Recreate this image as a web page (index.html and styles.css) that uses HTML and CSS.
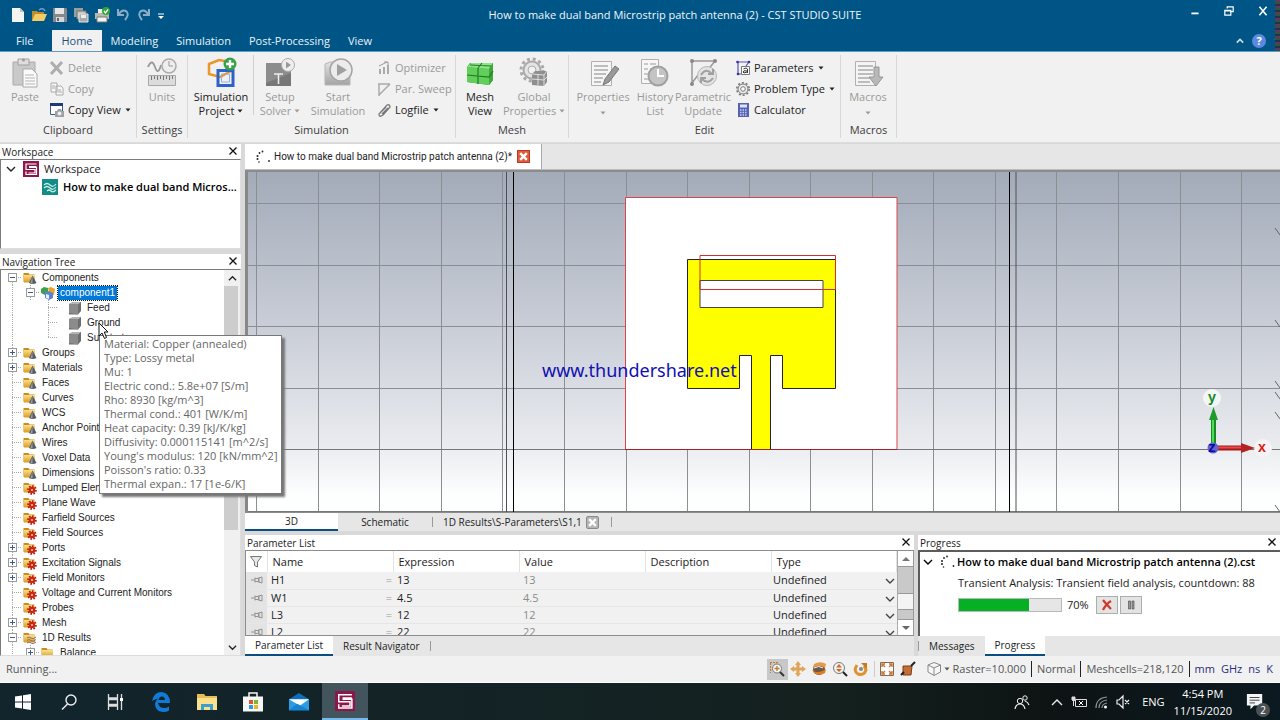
FILE: index.html
```html
<!DOCTYPE html>
<html lang="en">
<head>
<meta charset="utf-8">
<title>How to make dual band Microstrip patch antenna (2) - CST STUDIO SUITE</title>
<link rel="stylesheet" href="styles.css">
</head>
<body>
<svg class="sprite" aria-hidden="true">
  <defs>
    <linearGradient id="gold" x1="0" y1="0" x2="0" y2="1"><stop offset="0" stop-color="#fbe08a"/><stop offset="1" stop-color="#d79a20"/></linearGradient>
    <linearGradient id="sky" x1="0" y1="0" x2="0" y2="1"><stop offset="0" stop-color="#a3abb9"/><stop offset="0.5" stop-color="#cdd1da"/><stop offset="0.8" stop-color="#e9ebef"/><stop offset="0.95" stop-color="#fdfefe"/><stop offset="1" stop-color="#ffffff"/></linearGradient>
    <linearGradient id="grey" x1="0" y1="0" x2="0" y2="1"><stop offset="0" stop-color="#e2e2e2"/><stop offset="1" stop-color="#a4a4a4"/></linearGradient>
  </defs>
  <symbol id="folder" viewBox="0 0 14 14"><path d="M0.5 2h5l1 1.500h5V11H.5z" fill="#c98d1e"/><path d="M1 4h11v7.500H1z" fill="url(#gold)"/></symbol>
  <symbol id="fcone" viewBox="0 0 14 14"><use href="#folder"/><path d="M9.500 4.500L13.500 12q-4 2-7.500 0z" fill="#555b66"/><path d="M9.500 5l-2 7 2 .5z" fill="#9aa1ad"/></symbol>
  <symbol id="fgear" viewBox="0 0 14 14"><use href="#folder"/><circle cx="9" cy="9" r="3.800" fill="none" stroke="#b51c0e" stroke-width="2" stroke-dasharray="1.600 1.300"/><circle cx="9" cy="9" r="3.200" fill="#cf2414"/><circle cx="9" cy="9" r="1" fill="#f6d9a0"/></symbol>
  <symbol id="fwave" viewBox="0 0 14 14"><use href="#folder"/><path d="M4 7q2-2 4 0t5-1M4 9.500q2-2 4 0t5-1M4 12q2-2 4 0t5-1" fill="none" stroke="#8a6d6d"/></symbol>
  <symbol id="cube" viewBox="0 0 14 14"><path d="M1 3l4-2h8v9l-3 3.500H1z" fill="#6d6d6d"/><path d="M1 3l4-2h8l-3 2.500z" fill="#b5b5b5"/><path d="M1 3l9 .5v10L1 12z" fill="#8b8b8b"/></symbol>
  <symbol id="comp" viewBox="0 0 14 14"><path d="M0 3l3-2 4 1v5L4 9 0 7z" fill="#3da04a"/><path d="M7 2l3-1 4 2-1 6-4 1z" fill="#e5a52a"/><path d="M4 6l4-1 4 2v5l-4 2-4-2z" fill="#5b83d0"/><path d="M5 8l3 1v4l-3-1z" fill="#e8eefb"/></symbol>
  <symbol id="cst" viewBox="0 0 16 16"><path d="M0 0h16v16H0z" fill="#8c1748"/><path d="M13.500 3H3v5.500h9V12H5.500M6 5.500h7.500M3 10.500v3h10.500V6.500H6" fill="none" stroke="#fff" stroke-width="1.200"/></symbol>
  <symbol id="wave" viewBox="0 0 16 16"><path d="M0 0h16v16H0z" fill="#138b86"/><path d="M2 6q3-3 6 0t6-1M2 9q3-3 6 0t6-1M5 12q2-2 4 0t5-1" fill="none" stroke="#c9efe9" stroke-width="1.200"/></symbol>
  <symbol id="x" viewBox="0 0 10 10"><path d="M1.500 1.500l7 7M8.500 1.500l-7 7" stroke="currentColor" stroke-width="1.300"/></symbol>
  <symbol id="bx" viewBox="0 0 10 10"><path d="M2 2l6 6M8 2L2 8" stroke="currentColor" stroke-width="2.200"/></symbol>
  <symbol id="chev" viewBox="0 0 10 10"><path d="M1 3l4 4 4-4" fill="none" stroke="currentColor" stroke-width="1.400"/></symbol>
  <symbol id="tri" viewBox="0 0 6 6"><path d="M0.500 1.500h5L3 4.500z" fill="currentColor"/></symbol>
  <symbol id="spin" viewBox="0 0 16 16"><g fill="#222"><circle cx="7.500" cy="2.500" r=".9"/><circle cx="4.500" cy="4" r=".9"/><circle cx="2.500" cy="7" r="1"/><circle cx="2.500" cy="10" r="1"/><circle cx="4" cy="13" r=".8"/><circle cx="14" cy="12" r=".9"/></g></symbol>
  <symbol id="pin" viewBox="0 0 12 8"><path d="M0 4h4M4 1.500v5M4 2.500h3.500v3H4M8 1v6M8 2l3-1v6L8 6" fill="none" stroke="#929292"/></symbol>
</svg>

<header class="top">
  <div class="titlebar">
    <div class="quick">
      <button aria-label="New"><svg viewBox="0 0 16 16"><path d="M2 1h8l4 4v10H2z" fill="#f4f4f2"/><path d="M10 1v4h4z" fill="#c3c3bd"/></svg></button>
      <button aria-label="Open"><svg viewBox="0 0 16 16"><path d="M1 4h5l1 1h6v9H1z" fill="#c08b2a"/><path d="M4 7h12l-3 7H1z" fill="#f3cc68"/><path d="M8 3q4-3 6 1" fill="none" stroke="#6f9cc5" stroke-width="1.500"/></svg></button>
      <button aria-label="Save"><svg viewBox="0 0 16 16"><path d="M1 1h13l1 1v13H1z" fill="#85898d"/><path d="M3 1h9v6H3z" fill="#e6e6e6"/><path d="M4 10h8v5H4z" fill="#d7d7d7"/><path d="M5 11h2v3H5z" fill="#666"/></svg></button>
      <button aria-label="Save all"><svg viewBox="0 0 16 16"><path d="M1 1h9v9H1z" fill="#9a9da0"/><path d="M4 4h9v8H4z" fill="#c5c5c5" stroke="#6e7275"/><path d="M6 7h9v8H6z" fill="#a9a9a9" stroke="#e3e3e3"/><path d="M8 8h5v3H8z" fill="#eee"/></svg></button>
      <button aria-label="Print"><svg viewBox="0 0 16 16"><path d="M4 2h8v5H4z" fill="#eee"/><path d="M1 6h14v6H1z" fill="#b8b8b0"/><path d="M3 10h10v5H3z" fill="#f3f3f3" stroke="#777"/><circle cx="12" cy="4" r="4" fill="#2fa53a"/><path d="M10 4l1.500 2L14 2.500" fill="none" stroke="#fff" stroke-width="1.300"/></svg></button>
      <button aria-label="Undo"><svg viewBox="0 0 16 16"><path d="M3 2v6h6M4 7q3-5 7-3 4 3-1 9" fill="none" stroke="#8eacc6" stroke-width="2"/></svg></button>
      <button aria-label="Redo"><svg viewBox="0 0 16 16"><path d="M13 2v6H7M12 7Q9 2 5 4q-4 3 1 9" fill="none" stroke="#8eacc6" stroke-width="2"/></svg></button>
      <button class="narrow" aria-label="Customize toolbar"><svg viewBox="0 0 8 12"><path d="M1 5h6" stroke="#fff"/><path d="M1 7h6l-3 3z" fill="#fff"/></svg></button>
    </div>
    <h1>How to make dual band Microstrip patch antenna (2) - CST STUDIO SUITE</h1>
    <div class="winbtns">
      <button aria-label="Minimize"><svg viewBox="0 0 10 10"><path d="M2 7h6" stroke="#fff" stroke-width="1.500"/></svg></button>
      <button aria-label="Restore"><svg viewBox="0 0 10 10"><path d="M3.500 3V1.500h5v4H7M1.500 4.500h5v4h-5zM1.500 5h5" fill="none" stroke="#fff"/></svg></button>
      <button aria-label="Close"><svg viewBox="0 0 10 10"><path d="M2 1.500l6 7M8 1.500l-6 7" stroke="#fff" stroke-width="1.300"/></svg></button>
    </div>
  </div>
  <nav class="tabs">
    <button class="file">File</button><button class="on">Home</button><button>Modeling</button><button>Simulation</button><button>Post-Processing</button><button>View</button>
    <div class="help">
      <button aria-label="Collapse ribbon"><svg width="8" height="8" viewBox="0 0 10 10"><path d="M1 7l4-4 4 4" fill="none" stroke="#d2dee8" stroke-width="2"/></svg></button>
      <button class="q" aria-label="Help">?</button>
      <svg class="t"><use href="#tri"/></svg>
    </div>
  </nav>
  <div class="edge"></div>
</header>

<section class="ribbon" aria-label="Home ribbon">
  <div class="group g1">
    <div class="tools">
      <button class="big dim w48"><svg viewBox="0 0 32 32"><path d="M4 5h22v23H4z" fill="#c9c9c9" stroke="#aaa"/><path d="M9 2h11v6H9z" fill="#dedede" stroke="#a0a0a0"/><circle cx="14.500" cy="3" r="1.500" fill="#999"/><path d="M14 12h9l5 5v13H14z" fill="#fafafa" stroke="#a9a9a9"/><path d="M16 18h9M16 21h10M16 24h10M16 27h10" stroke="#b5b5b5"/></svg>Paste</button>
      <div class="stack">
        <button class="dim"><svg viewBox="0 0 16 16"><path d="M2 2l11 12M13 2L2 14" stroke="#adadad" stroke-width="3"/></svg>Delete</button>
        <button class="dim"><svg viewBox="0 0 16 16"><path d="M2 2h6v9H2zM7 5h5l2 2v7H7z" fill="#f7f7f7" stroke="#aaa"/><path d="M3 5h3M3 7h3M9 9h3M9 11h4" stroke="#aaa"/></svg>Copy</button>
        <button><svg viewBox="0 0 16 16"><path d="M1.500 2.500h12v10h-12z" fill="#fff" stroke="#3d5d92"/><path d="M1 1h13v3H1z" fill="#1c3b78"/><path d="M6 9h2l1-2h3l1 2h2v6H6z" fill="#9ba1a7"/><circle cx="10.500" cy="11.500" r="2" fill="#eee"/></svg>Copy View<svg class="t"><use href="#tri"/></svg></button>
      </div>
    </div>
    <h2>Clipboard</h2>
  </div>
  <div class="group g2">
    <div class="tools"><button class="big dim w48"><svg viewBox="0 0 32 32"><path d="M2 10q4-9 7 0t6-2" fill="none" stroke="#999" stroke-width="1.800"/><circle cx="23" cy="9" r="7" fill="#eee" stroke="#aaa" stroke-width="1.500"/><path d="M23 4v5h4" fill="none" stroke="#999"/><path d="M2.500 18.500h27v10h-27z" fill="#dcdcdc" stroke="#a8a8a8"/><path d="M5.500 19v4M8.500 19v3M11.500 19v4M14.500 19v3M17.500 19v4M20.500 19v3M23.500 19v4M26.500 19v3" stroke="#777"/></svg>Units</button></div>
    <h2>Settings</h2>
  </div>
  <div class="group g3">
    <div class="tools">
      <button class="big w64"><svg viewBox="0 0 32 32"><path d="M4 7l10-4 12 2v9l-11 6L4 17z" fill="none" stroke="#e9962a" stroke-width="2.500"/><path d="M13 13.500h15v15H13z" fill="none" stroke="#2e62c9" stroke-width="3"/><path d="M16.500 17h8v8h-8z" fill="none" stroke="#8fb0ee"/><circle cx="25" cy="7" r="6.500" fill="#38a345"/><path d="M25 3v8M21 7h8" stroke="#fff" stroke-width="2.400"/></svg>Simulation<span>Project <svg class="t"><use href="#tri"/></svg></span></button>
      <i class="sep"></i>
      <button class="big dim w52"><svg viewBox="0 0 32 32"><path d="M2 6h25v23H2z" fill="#777"/><path d="M2 6h25v10L2 26z" fill="#8c8c8c"/><path d="M10 17h9M14.500 17v10" stroke="#eee" stroke-width="1.500"/><circle cx="24" cy="8" r="6.500" fill="#eee" stroke="#aaa"/><path d="M22 4.500v7l5-3.500z" fill="#999"/></svg>Setup<span>Solver <svg class="t"><use href="#tri"/></svg></span></button>
      <button class="big dim w64"><svg viewBox="0 0 32 32"><path d="M3 7l5-2h16l4 3v20H3z" fill="url(#grey)" stroke="#b5b5b5"/><circle cx="19" cy="13" r="11" fill="#ececec" stroke="#a5a5a5" stroke-width="1.500"/><path d="M15 7v12l10-6z" fill="#a0a0a0"/></svg>Start<span>Simulation</span></button>
      <div class="stack in">
        <button class="dim"><svg viewBox="0 0 16 16"><path d="M3 9h2v5H3zM7 7h2v7H7zM11 5h2v9h-2z" fill="#aaa"/><path d="M3 6l8-4M8 2h4v3" fill="none" stroke="#999"/></svg>Optimizer</button>
        <button class="dim"><svg viewBox="0 0 16 16"><path d="M2 3h12M14 3L3 14M3 3v12" fill="none" stroke="#aaa" stroke-width="1.500"/></svg>Par. Sweep</button>
        <button><svg viewBox="0 0 16 16"><path d="M4 11l7-8q3-1 3 2l-7 8q-4 3-4-1l7-7M6 12l6-6" fill="none" stroke="#777" stroke-width="1.300"/></svg>Logfile<svg class="t"><use href="#tri"/></svg></button>
      </div>
    </div>
    <h2>Simulation</h2>
  </div>
  <div class="group g4">
    <div class="tools">
      <button class="big w48"><svg viewBox="0 0 32 32"><path d="M3 10l3-4h23v17l-4 5-22-3z" fill="#2e8c2e"/><path d="M3 10l22 2v16L3 25z" fill="#62cf5a"/><path d="M3 10l4-4h22l-4 6z" fill="#8ee487"/><path d="M25 12l4-6v17l-4 5z" fill="#3fa83a"/><path d="M14 11v16M3 18l22 2 4-6M6 8l21 1M14 11l4-5" fill="none" stroke="#217a24" stroke-width="1.200"/></svg>Mesh<span>View</span></button>
      <button class="big dim w60"><svg viewBox="0 0 32 32"><circle cx="14" cy="13" r="11" fill="none" stroke="#aaa" stroke-width="3" stroke-dasharray="3 2.800"/><circle cx="14" cy="13" r="8.500" fill="#e4e4e4" stroke="#aaa" stroke-width="2"/><circle cx="14" cy="13" r="4" fill="#f1f1f1" stroke="#aaa"/><path d="M14 17l3-3h12v11l-3 4-12-1z" fill="#8f8f8f"/><path d="M14 17l12 1 3-4M20 17v11M14 22l12 1 3-3M26 18v11" fill="none" stroke="#ddd"/></svg>Global<span>Properties <svg class="t"><use href="#tri"/></svg></span></button>
    </div>
    <h2>Mesh</h2>
  </div>
  <div class="group g5">
    <div class="tools">
      <button class="big dim w60"><svg viewBox="0 0 32 32"><path d="M4.500 4.500h20v24h-20z" fill="#f6f6f6" stroke="#b0b0b0"/><path d="M7 9h14M7 13h14M7 17h12M7 21h9M7 25h7" stroke="#aaa" stroke-width="1.500"/><path d="M16 28l2-6L28 9l4 3-10 13z" fill="#999" stroke="#777"/></svg>Properties<svg class="t"><use href="#tri"/></svg></button>
      <button class="big dim w44"><svg viewBox="0 0 32 32"><path d="M2.500 2.500h17v24h-17z" fill="#f6f6f6" stroke="#b0b0b0"/><path d="M5 7h4M5 12h4M5 17h4M5 22h4M11 7h6M11 12h6" stroke="#999"/><circle cx="19" cy="19" r="9.500" fill="#c4c4c4" stroke="#a0a0a0" stroke-width="2"/><path d="M19 12v7h6" fill="none" stroke="#fff" stroke-width="2"/></svg>History<span>List</span></button>
      <button class="big dim w52"><svg viewBox="0 0 32 32"><path d="M5 4h23M28 4l-8 10M5 4v22M5 26l6-8" fill="none" stroke="#999" stroke-width="1.500"/><g fill="#888"><circle cx="5" cy="4" r="2"/><circle cx="28" cy="4" r="2"/><circle cx="5" cy="27" r="2"/></g><circle cx="20" cy="19" r="9.500" fill="#e3e3e3" stroke="#b5b5b5"/><path d="M14 18q5-8 11-1M26 12v5h-5M26 21q-5 7-11 1M14 26v-5h5" fill="none" stroke="#a0a0a0" stroke-width="2"/></svg>Parametric<span>Update</span></button>
      <div class="stack in">
        <button><svg viewBox="0 0 16 16"><path d="M2 2h12M3 2v12M3 14h3M14 2l-3 4" fill="none" stroke="#5953b8" stroke-width="1.200"/><g fill="#333399"><circle cx="2.500" cy="2" r="1.300"/><circle cx="14" cy="2" r="1.300"/><circle cx="3" cy="14" r="1.300"/></g><path d="M6.500 6.500h8v8h-8z" fill="#fff" stroke="#777"/><path d="M8.500 9q3-2 4 0v4M12 11q-4-1-4 1t4 0" fill="none" stroke="#333"/></svg>Parameters<svg class="t"><use href="#tri"/></svg></button>
        <button><svg viewBox="0 0 16 16"><circle cx="8" cy="8" r="6.200" fill="none" stroke="#777" stroke-width="1.600" stroke-dasharray="2 1.900"/><circle cx="8" cy="8" r="5" fill="#ededed" stroke="#777"/><circle cx="8" cy="8" r="2.300" fill="#fff" stroke="#777"/></svg>Problem Type<svg class="t"><use href="#tri"/></svg></button>
        <button><svg viewBox="0 0 16 16"><path d="M3 1h11v14H3z" fill="#5362b5"/><path d="M5 2.500h7v3H5z" fill="#dfe5ff"/><path d="M5 8h7M5 10.500h7M5 13h7" stroke="#c5cdf3" stroke-width="1.500" stroke-dasharray="1.500 1"/></svg>Calculator</button>
      </div>
    </div>
    <h2>Edit</h2>
  </div>
  <div class="group g6">
    <div class="tools"><button class="big dim w52"><svg viewBox="0 0 32 32"><path d="M3.500 4.500h20v24h-20z" fill="#f4f4f4" stroke="#b0b0b0"/><path d="M6 9h15M6 13h15M6 17h15M6 21h12M6 25h12" stroke="#aaa" stroke-width="1.500"/><path d="M22 10h5v10h4l-7 9-7-9h5z" fill="#b8b8b8" stroke="#969696"/></svg>Macros<svg class="t"><use href="#tri"/></svg></button></div>
    <h2>Macros</h2>
  </div>
</section>

<main>
  <aside>
    <section class="pane workspace">
      <header><h2>Workspace</h2><button aria-label="Close Workspace"><svg><use href="#x"/></svg></button></header>
      <ul class="box">
        <li><svg class="c"><use href="#chev"/></svg><svg class="i"><use href="#cst"/></svg>Workspace</li>
        <li class="sub"><svg class="i"><use href="#wave"/></svg><b>How to make dual band Micros...</b></li>
      </ul>
    </section>
    <section class="pane navigation">
      <header><h2>Navigation Tree</h2><button aria-label="Close Navigation Tree"><svg><use href="#x"/></svg></button></header>
      <div class="box treebox">
        <ul class="tree" role="tree">
          <li><i class="st first"><button class="m" aria-label="Collapse"></button></i><svg><use href="#fcone"/></svg><span>Components</span></li>
          <li><i class="v"></i><i class="st"><button class="m" aria-label="Collapse"></button></i><svg><use href="#comp"/></svg><span class="sel">component1</span></li>
          <li><i class="v"></i><i class="gap"></i><i class="st deep"></i><svg><use href="#cube"/></svg><span>Feed</span></li>
          <li><i class="v"></i><i class="gap"></i><i class="st deep"></i><svg><use href="#cube"/></svg><span>Ground</span></li>
          <li><i class="v"></i><i class="gap"></i><i class="st deep last"></i><svg><use href="#cube"/></svg><span>Substrate</span></li>
          <li><i class="st"><button class="m p" aria-label="Expand"></button></i><svg><use href="#fcone"/></svg><span>Groups</span></li>
          <li><i class="st"><button class="m p" aria-label="Expand"></button></i><svg><use href="#fcone"/></svg><span>Materials</span></li>
          <li><i class="st"></i><svg><use href="#fcone"/></svg><span>Faces</span></li>
          <li><i class="st"></i><svg><use href="#fcone"/></svg><span>Curves</span></li>
          <li><i class="st"></i><svg><use href="#fcone"/></svg><span>WCS</span></li>
          <li><i class="st"></i><svg><use href="#fcone"/></svg><span>Anchor Points</span></li>
          <li><i class="st"></i><svg><use href="#fcone"/></svg><span>Wires</span></li>
          <li><i class="st"></i><svg><use href="#fcone"/></svg><span>Voxel Data</span></li>
          <li><i class="st"></i><svg><use href="#fcone"/></svg><span>Dimensions</span></li>
          <li><i class="st"></i><svg><use href="#fgear"/></svg><span>Lumped Elements</span></li>
          <li><i class="st"></i><svg><use href="#fgear"/></svg><span>Plane Wave</span></li>
          <li><i class="st"></i><svg><use href="#fgear"/></svg><span>Farfield Sources</span></li>
          <li><i class="st"></i><svg><use href="#fgear"/></svg><span>Field Sources</span></li>
          <li><i class="st"><button class="m p" aria-label="Expand"></button></i><svg><use href="#fgear"/></svg><span>Ports</span></li>
          <li><i class="st"><button class="m p" aria-label="Expand"></button></i><svg><use href="#fgear"/></svg><span>Excitation Signals</span></li>
          <li><i class="st"><button class="m p" aria-label="Expand"></button></i><svg><use href="#fgear"/></svg><span>Field Monitors</span></li>
          <li><i class="st"></i><svg><use href="#fgear"/></svg><span>Voltage and Current Monitors</span></li>
          <li><i class="st"></i><svg><use href="#fgear"/></svg><span>Probes</span></li>
          <li><i class="st"><button class="m p" aria-label="Expand"></button></i><svg><use href="#fgear"/></svg><span>Mesh</span></li>
          <li><i class="st"><button class="m" aria-label="Collapse"></button></i><svg><use href="#fwave"/></svg><span>1D Results</span></li>
          <li><i class="v"></i><i class="st"><button class="m p" aria-label="Expand"></button></i><svg><use href="#folder"/></svg><span>Balance</span></li>
        </ul>
        <div class="scroll">
          <button aria-label="Scroll up"><svg class="up"><use href="#chev"/></svg></button>
          <div class="track"><div class="thumb"></div></div>
          <button aria-label="Scroll down"><svg><use href="#chev"/></svg></button>
        </div>
      </div>
      <svg class="cursor" viewBox="0 0 12 18"><path d="M1 1v13l3-3 2.500 5.500 2-1L6.300 10H10z" fill="#fff" stroke="#111"/></svg>
      <div class="tip" role="tooltip">Material: Copper (annealed)<br>Type: Lossy metal<br>Mu: 1<br>Electric cond.: 5.8e+07 [S/m]<br>Rho: 8930 [kg/m^3]<br>Thermal cond.: 401 [W/K/m]<br>Heat capacity: 0.39 [kJ/K/kg]<br>Diffusivity: 0.000115141 [m^2/s]<br>Young's modulus: 120 [kN/mm^2]<br>Poisson's ratio: 0.33<br>Thermal expan.: 17 [1e-6/K]</div>
    </section>
  </aside>

  <div class="work">
    <div class="docs"><div class="doc"><svg class="i"><use href="#spin"/></svg><span>How to make dual band Microstrip patch antenna (2)*</span><button aria-label="Close document"><svg><use href="#bx"/></svg></button></div></div>
    <div class="view">
      <svg viewBox="248 172 1032 340" preserveAspectRatio="xMidYMid slice" role="img" aria-label="Patch antenna front view">
        <path d="M248 172h1032v340H248z" fill="url(#sky)"/>
        <path d="M256.500 172v340M318.500 172v340M379.500 172v340M441.500 172v340M502.500 172v340M564.500 172v340M626.500 172v340M687.500 172v340M749.500 172v340M810.500 172v340M872.500 172v340M933.500 172v340M995.500 172v340M1056.500 172v340M1118.500 172v340M1180.500 172v340M1241.500 172v340M248 203.500h1032M248 265.500h1032M248 326.500h1032M248 388.500h1032" stroke="#8b8e93"/>
        <path d="M248 449.500h1032M248 511.500h1032" stroke="#777"/>
        <path d="M506.500 172v340M1016 172v340" stroke="#4e5056"/>
        <path d="M513.500 172v340M1009.500 172v340" stroke="#000"/>
        <path d="M625.500 197.500h271.500v252H625.500z" fill="#fff" stroke="#d8464c"/>
        <path d="M687 259.500h148.500V388H782.500V355.500H770.500V449H751.500V355.500H739.500V388H687z" fill="#ff0"/>
        <path d="M700 280.500h123v27H700z" fill="#fff" stroke="#444"/>
        <path d="M751.500 449V355.500H739.500V388.500H687.500V259.500H835.500V388.500H782.500V355.500H770.500V449" fill="none" stroke="#222"/>
        <path d="M700 255.500h135.500v34H700z" fill="none" stroke="#cc3030"/>
        <path d="M625 449.500h272" stroke="#a02228"/>
        <path d="M1275 228l5 7M1275 320l5 7M1275 381l5 7M1275 392l5 7M1275 412l5 7M1275 505l5 7" stroke="#666"/>
        <text class="mark" x="542" y="377">www.thundershare.net</text>
        <circle cx="1212" cy="398" r="9" fill="#f4f6f5"/><circle cx="1263" cy="448" r="9" fill="#f4f4f4"/>
        <path d="M1213.500 445v-28" stroke="#198a25" stroke-width="5"/><path d="M1213 445v-28" stroke="#49e058" stroke-width="2"/><path d="M1209 420l4.500-13 4.500 13z" fill="#209a2c"/>
        <path d="M1216 448h27" stroke="#a11a1a" stroke-width="5"/><path d="M1216 447.500h27" stroke="#ea4848" stroke-width="2"/><path d="M1241 443l14 5-14 5z" fill="#b52323"/>
        <circle cx="1213" cy="448" r="5.500" fill="#6464cc"/>
        <text class="ax" x="1212" y="402" fill="#0f8a1a">y</text><text class="ax" x="1262" y="452" fill="#e01616">x</text><text class="ax" x="1212" y="452" fill="#0808a8">z</text>
      </svg>
    </div>
    <div class="viewtabs"><button class="on">3D</button><button class="s">Schematic</button><i></i><button class="r">1D Results\S-Parameters\S1,1</button><button class="cl" aria-label="Close result"><svg><use href="#bx"/></svg></button><i></i></div>

    <div class="bottom">
      <section class="pane params">
        <header><h2>Parameter List</h2><button aria-label="Close Parameter List"><svg><use href="#x"/></svg></button></header>
        <div class="tablebox">
          <table>
            <thead><tr><th class="f"><svg viewBox="0 0 14 14"><path d="M1.500 1.500h11L8.500 7v5l-3-1.500V7z" fill="#e9e9e9" stroke="#777"/></svg></th><th class="n">Name</th><th class="n">Expression</th><th class="n">Value</th><th class="n">Description</th><th>Type</th></tr></thead>
            <tbody>
              <tr><td class="f"><svg><use href="#pin"/></svg></td><td>H1<em>=</em></td><td>13</td><td class="val">13</td><td></td><td class="ty"><select aria-label="Type of H1"><option>Undefined</option></select><svg><use href="#chev"/></svg></td></tr>
              <tr><td class="f"><svg><use href="#pin"/></svg></td><td>W1<em>=</em></td><td>4.5</td><td class="val">4.5</td><td></td><td class="ty"><select aria-label="Type of W1"><option>Undefined</option></select><svg><use href="#chev"/></svg></td></tr>
              <tr><td class="f"><svg><use href="#pin"/></svg></td><td>L3<em>=</em></td><td>12</td><td class="val">12</td><td></td><td class="ty"><select aria-label="Type of L3"><option>Undefined</option></select><svg><use href="#chev"/></svg></td></tr>
              <tr><td class="f"><svg><use href="#pin"/></svg></td><td>L2<em>=</em></td><td>22</td><td class="val">22</td><td></td><td class="ty"><select aria-label="Type of L2"><option>Undefined</option></select><svg><use href="#chev"/></svg></td></tr>
            </tbody>
          </table>
          <div class="bar">
            <button aria-label="Scroll up"><svg viewBox="0 0 10 10"><path d="M1 7h8L5 3z" fill="#777"/></svg></button>
            <div class="track"><div class="thumb"></div></div>
            <button aria-label="Scroll down"><svg viewBox="0 0 10 10"><path d="M1 3h8L5 7z" fill="#666"/></svg></button>
          </div>
        </div>
        <div class="ptabs"><button class="on">Parameter List</button><button>Result Navigator</button><i></i></div>
      </section>
      <section class="pane progress">
        <header><h2>Progress</h2><button aria-label="Close Progress"><svg><use href="#x"/></svg></button></header>
        <div class="job">
          <div class="jt"><svg class="c"><use href="#chev"/></svg><svg class="i"><use href="#spin"/></svg><b>How to make dual band Microstrip patch antenna (2).cst</b></div>
          <label class="jl" for="pr">Transient Analysis: Transient field analysis, countdown: 88</label>
          <div class="jp"><progress id="pr" max="100" value="69"></progress><span>70%</span>
            <button aria-label="Abort"><svg viewBox="0 0 12 12"><path d="M2 1q3 4 8 9M10 2Q5 5 2 11" fill="none" stroke="#cf3a2c" stroke-width="2.200"/></svg></button>
            <button aria-label="Pause"><svg viewBox="0 0 12 12"><path d="M3.500 2h2v8h-2zM7 2h2v8H7z" fill="#999" stroke="#555" stroke-width=".7"/></svg></button></div>
        </div>
        <div class="ptabs"><i></i><button>Messages</button><button class="on">Progress</button></div>
      </section>
    </div>
  </div>
</main>

<footer class="status">
  <span>Running...</span>
  <div class="right">
    <button class="press" aria-label="Zoom"><svg viewBox="0 0 16 16"><path d="M1.500 2v10M1 1.500h9" stroke="#c27a2c" stroke-dasharray="2 1"/><circle cx="8" cy="7.500" r="4.500" fill="#f4f4f4" stroke="#777"/><path d="M8 5v5M5.500 7.500h5" stroke="#c27a2c" stroke-width="1.300"/><path d="M11 11l4 4" stroke="#333" stroke-width="2"/></svg></button>
    <button aria-label="Pan"><svg viewBox="0 0 16 16"><path d="M8 0l3 4H9.500v2.500H12V5l4 3-4 3V9.500H9.500V12H11l-3 4-3-4h1.500V9.500H4V11L0 8l4-3v1.500h2.500V4H5z" fill="#e0a556"/></svg></button>
    <button aria-label="Rotate"><svg viewBox="0 0 16 16"><circle cx="8" cy="8" r="6" fill="#6c5848"/><path d="M1 9q6 5 14-1l-1 4q-6 3-11 0z" fill="#dd7f1e"/><path d="M2 7q6-4 12 0l1-4-2-1Q8 0 3 3z" fill="#e49a46"/><path d="M3 7q5-3 9 0" fill="none" stroke="#eee"/></svg></button>
    <button aria-label="Dynamic zoom"><svg viewBox="0 0 16 16"><circle cx="7" cy="7" r="5.500" fill="#f4f4f4" stroke="#777"/><path d="M4 6.500L7 3l3 3.500zM4 8h6l-3 3z" fill="#cf6a24"/><path d="M11 11l4 4" stroke="#222" stroke-width="2"/></svg></button>
    <button aria-label="Rotate view plane"><svg viewBox="0 0 16 16"><path d="M4 4q-4 6 1 9 6 2 8-4-1-3-2-4" fill="none" stroke="#e09231" stroke-width="3"/><path d="M8 2h6v6z" fill="#c87822"/><circle cx="8" cy="8" r="2" fill="#888"/></svg></button>
    <i></i>
    <button aria-label="Reset view"><svg viewBox="0 0 16 16"><path d="M1.500 1.500h13v13h-13z" fill="#fff" stroke="#8a6a4a"/><path d="M3 6V3h3M10 3h3v3M13 10v3h-3M6 13H3v-3M3 3l3 3M13 3l-3 3M13 13l-3-3M3 13l3-3" fill="none" stroke="#c57838" stroke-width="1.400"/></svg></button>
    <button aria-label="Working plane"><svg viewBox="0 0 16 16"><path d="M3 5h9l-1 9H3z" fill="#c66d33" stroke="#74411f"/><path d="M1 14l3-3M11 5l4-4" stroke="#222" stroke-width="2"/></svg></button>
    <button class="box3" aria-label="Perspective"><svg viewBox="0 0 16 16"><path d="M2 4l6-2.500L14.500 4v7L8 14.500 2 11zM2 4l6 3 6.500-3M8 7v7" fill="#f7f7f7" stroke="#888"/></svg><svg class="t"><use href="#tri"/></svg></button>
    <span>Raster=10.000</span><b></b><span>Normal</span><b></b><span>Meshcells=218,120</span><b></b><span class="u">mm</span><span class="u">GHz</span><span class="u">ns</span><span class="u">K</span>
  </div>
</footer>

<footer class="taskbar">
  <button aria-label="Start"><svg viewBox="0 0 20 20"><path d="M2 4.500l7-1v6H2zM10 3.300L18 2v7.500h-8zM2 10.500h7v6l-7-1zM10 10.500h8V18l-8-1.300z" fill="#fff"/></svg></button>
  <button aria-label="Search"><svg viewBox="0 0 20 20"><circle cx="12" cy="8" r="5" fill="none" stroke="#eee" stroke-width="1.400"/><path d="M8.500 12L3 17.500" stroke="#eee" stroke-width="1.400"/></svg></button>
  <button aria-label="Task view"><svg viewBox="0 0 20 20"><path d="M3.500 2v4h9V2M3.500 18v-4h9v4M3.500 7.500h9v5h-9zM16.500 2v16" fill="none" stroke="#ddd" stroke-width="1.300"/><path d="M15 6h3v3h-3z" fill="#fff"/></svg></button>
  <button aria-label="Edge"><svg viewBox="0 0 20 20"><path d="M1 9Q3 0 10.500 0 19 1 19 11H7q1 5 6 5 3 0 5-1.500v4Q16 20 12 20 4 19 4 12q0-3 3-5.500Q4 7 1 9zm6.500-1H14q0-3.500-3-3.500T7.500 8z" fill="#0f7bd8"/></svg></button>
  <button aria-label="File Explorer"><svg viewBox="0 0 20 20"><path d="M0 2h7l1.500 2H20v14H0z" fill="#e9bd55"/><path d="M0 6h20v12H0z" fill="#fbe18d"/><path d="M4 18v-6h12v6h-3v-3H7v3z" fill="#3c9fd0"/></svg></button>
  <button aria-label="Store"><svg viewBox="0 0 20 20"><path d="M0 4.500h20v15H0z" fill="#f6f6f6"/><path d="M6 5V1h8v4" fill="none" stroke="#f6f6f6" stroke-width="1.500"/><path d="M6 8h4v4H6z" fill="#e2552b"/><path d="M11 8h4v4h-4z" fill="#7eb72b"/><path d="M6 13h4v4H6z" fill="#2b9ed8"/><path d="M11 13h4v4h-4z" fill="#f0b524"/></svg></button>
  <button aria-label="Mail"><svg viewBox="0 0 22 20"><path d="M0 7L11 0l11 7v12H0z" fill="#0f6cbd"/><path d="M0 7h22v12H0z" fill="#2a9be6"/><path d="M0 7h22L12 14z" fill="#fff"/><path d="M0 19l9-7 4 2 9 5z" fill="#1683d3"/></svg></button>
  <button class="act" aria-label="CST Studio Suite"><svg><use href="#cst"/></svg></button>
  <div class="tray">
    <svg class="pp" viewBox="0 0 16 16"><circle cx="6" cy="7" r="2.700" fill="none" stroke="#eee"/><path d="M1 15q1-5 5-5t5 5M11 7q3 1 4 4" fill="none" stroke="#eee" stroke-width="1.200"/><circle cx="11" cy="4" r="2.200" fill="none" stroke="#eee"/></svg>
    <svg viewBox="0 0 16 16"><path d="M3 11l5-5 5 5" fill="none" stroke="#eee" stroke-width="1.400"/></svg>
    <svg viewBox="0 0 16 16"><path d="M4.500 5.500h11v7h-11z" fill="none" stroke="#ddd"/><path d="M8 7l4 4M12 7l-4 4" stroke="#fff"/><path d="M1 3v3q2 2 3 0V3zM2.500 7v5" fill="#ddd" stroke="#ddd"/></svg>
    <svg viewBox="0 0 16 16"><path d="M3 14Q3 4 14 3M6 14Q6 7 14 6M9 14Q9 10 14 9" fill="none" stroke="#8a9498" stroke-width="1.200"/><circle cx="12.500" cy="13" r="1.500" fill="#fff"/></svg>
    <svg viewBox="0 0 16 16"><path d="M2 6h2l4-4v12l-4-4H2zM10 6l4 4M14 6l-4 4" fill="none" stroke="#eee" stroke-width="1.200"/></svg>
    <span class="eng">ENG</span>
    <time>4:54 PM<br>11/15/2020</time>
    <div class="note"><svg viewBox="0 0 20 20"><path d="M1 1h17v13H9l-4 4v-4H1z" fill="#f4f4f4"/><path d="M4 5h11M4 8h11M4 11h6" stroke="#333"/></svg><span>2</span></div>
  </div>
</footer>
</body>
</html>
```
FILE: styles.css
```css
* { box-sizing: border-box; }
body {
  margin: 0; height: 100vh; display: flex; flex-direction: column; overflow: hidden;
  background: #d9d9d9; color: #222;
  font-family: "Open Sans", "Noto Sans", sans-serif; font-size: 11px; line-height: 14px;
}
button, select { font: inherit; color: inherit; background: none; border: 0; padding: 0; margin: 0; }
h1, h2 { margin: 0; font-size: inherit; font-weight: 400; }
ul { list-style: none; margin: 0; padding: 0; }
i, em { font-style: normal; }
b { font-weight: 600; }
svg { display: block; flex: none; }
.sprite { position: absolute; width: 0; height: 0; }
svg.t { width: 6px; height: 6px; }

.top { position: relative; flex: none; background: #005587; color: #fff; border-bottom: 1px solid #5f9bc4; }
.edge { position: absolute; top: 0; right: 0; bottom: 0; width: 5px; background: repeating-linear-gradient(#5b3a5c 0 2px, #32543f 2px 4px, #28304f 4px 6px); }
.titlebar { display: grid; grid-template-columns: 49fr auto 42fr; align-items: center; height: 30px; }
.quick { display: flex; gap: 5px; padding-left: 10px; height: 24px; align-items: center; }
.quick button { width: 16px; }
.quick svg { width: 16px; height: 16px; }
.quick .narrow { width: 10px; }
.quick .narrow svg { width: 8px; height: 12px; }
.titlebar h1 { color: #f0f6fa; }
.winbtns { display: flex; justify-content: flex-end; gap: 22px; padding-right: 11px; height: 30px; align-items: flex-start; padding-top: 5px; }
.winbtns button { width: 12px; }
.winbtns svg { width: 12px; height: 12px; margin: auto; }
.tabs { display: flex; height: 21px; padding-left: 7px; align-items: stretch; }
.tabs > button { padding: 1px 9px 0; color: #e9f2f8; }
.tabs .file { padding-right: 19px; }
.tabs .on { background: #f1f1f1; color: #1d4f7b; }
.help { display: flex; align-items: center; gap: 8px; margin-left: auto; padding-right: 0; }
.help .q { width: 14px; height: 14px; border-radius: 50%; background: #5a8ade; font-weight: 700; line-height: 14px; }

.ribbon { flex: none; display: flex; height: 91px; padding: 3px 0 4px; background: #f1f1f1; border-bottom: 1px solid #dcdcdc; }
.group { flex: none; display: flex; flex-direction: column; border-right: 1px solid #d8d8d8; }
.group h2 { margin-top: auto; text-align: center; line-height: 18px; color: #3c3c3c; }
.tools { display: flex; height: 66px; }
.g1 { width: 137px; } .g2 { width: 51px; } .g3 { width: 268px; } .g4 { width: 113px; } .g5 { width: 272px; } .g6 { width: 56px; }
.g1 .tools, .g2 .tools, .g3 .tools, .g6 .tools { padding-left: 1px; }
.g5 .tools { padding-left: 4px; }
.big { display: flex; flex-direction: column; align-items: center; height: 66px; white-space: nowrap; }
.big > svg:first-child { width: 32px; height: 32px; margin: 2px 0 1px; }
.big span { display: flex; align-items: center; gap: 3px; }
.big > svg.t { margin-top: 6px; }
.w44 { width: 44px; } .w48 { width: 48px; } .w52 { width: 52px; } .w60 { width: 60px; } .w64 { width: 64px; }
.dim { color: #9a9a9a; }
.sep { width: 1px; height: 60px; background: #d0d0d0; }
.stack { display: flex; flex-direction: column; padding-top: 2px; }
.stack.in { padding-left: 6px; }
.stack button { display: flex; align-items: center; gap: 3px; height: 21px; white-space: nowrap; }
.stack svg { width: 16px; height: 16px; }
.stack svg.t { width: 6px; height: 6px; margin-left: 1px; }

main { flex: 1; display: grid; grid-template-columns: 241px minmax(0, 1fr); grid-template-rows: minmax(0, 1fr); column-gap: 4px; min-height: 0; padding-top: 1px; }
aside { display: flex; flex-direction: column; gap: 5px; min-height: 0; }
.pane { position: relative; display: flex; flex-direction: column; min-height: 0; background: #fff; }
.pane > header { flex: none; display: flex; justify-content: space-between; align-items: center; height: 15px; padding: 0 2px; font-size: 10px; }
.pane > header svg { width: 10px; height: 10px; }
.pane > header button { padding: 0 1px 2px; color: #111; }
.box { flex: 1; background: #fff; border: 1px solid #7b7b7b; border-right-color: #ddd; border-bottom-color: #ddd; min-height: 0; }
.workspace { flex: none; height: 105px; }
.workspace li { display: flex; align-items: center; height: 18px; padding-left: 5px; white-space: nowrap; }
.workspace li.sub { padding-left: 41px; color: #000; }
.workspace .c { width: 10px; height: 10px; margin-right: 7px; }
.workspace .i { width: 16px; height: 16px; margin-right: 5px; }
.navigation { flex: 1; }
.treebox { display: flex; overflow: hidden; }
.tree { flex: 1; min-width: 0; overflow: hidden; font-family: "Liberation Sans", sans-serif; font-size: 10px; line-height: 13px; }
.tree li { display: flex; align-items: center; height: 15px; white-space: nowrap; }
.tree svg { width: 14px; height: 14px; margin-right: 3px; }
.tree span { padding: 0 2px; }
.tree .sel { background: #0078d7; color: #fff; outline: 1px dotted #112; line-height: 14px; }
.tree i { flex: none; height: 15px; width: 18px; }
.tree .v { background: repeating-linear-gradient(#aaa 0 1px, transparent 1px 2px) 11px 0 / 1px 100% no-repeat; }
.tree .st { width: 22px; padding: 3px 7px; background: repeating-linear-gradient(#aaa 0 1px, transparent 1px 2px) 11px 0 / 1px 100% no-repeat, repeating-linear-gradient(90deg, #aaa 0 1px, transparent 1px 2px) 11px 7px / 10px 1px no-repeat; }
.tree .first { background-position: 11px 8px, 11px 7px; }
.tree .last { background-size: 1px 8px, 10px 1px; }
.tree .deep { width: 31px; }
.m { display: block; width: 9px; height: 9px; border: 1px solid #9a9a9a; background: linear-gradient(#3b5a9c, #3b5a9c) 1px 3px / 5px 1px no-repeat, #fff; }
.m.p { background: linear-gradient(#3b5a9c, #3b5a9c) 1px 3px / 5px 1px no-repeat, linear-gradient(#3b5a9c, #3b5a9c) 3px 1px / 1px 5px no-repeat, #fff; }
.scroll { display: flex; flex-direction: column; width: 16px; background: #f0f0f0; }
.scroll button { height: 16px; }
.scroll svg { width: 9px; height: 9px; margin: auto; }
.scroll svg.up { transform: rotate(180deg); }
.scroll .track { flex: 1; }
.scroll .thumb { height: 69%; width: 14px; background: #cdcdcd; }
.cursor { position: absolute; left: 98px; top: 68px; width: 12px; height: 18px; z-index: 3; }
.tip { position: absolute; left: 99px; top: 81px; z-index: 2; padding: 1px 4px 2px; background: #fff; border: 1px solid #777; box-shadow: 3px 3px 2px #777; color: #666; white-space: nowrap; width: 183px; }

.work { display: flex; flex-direction: column; min-width: 0; min-height: 0; }
.docs { flex: none; height: 26px; background: #e6e6e6; border-bottom: 1px solid #bbb; }
.doc { display: inline-flex; align-items: center; gap: 2px; height: 25px; padding: 0 11px 0 9px; background: #fff; border-right: 1px solid #aaa; font-family: Roboto, "Open Sans", sans-serif; font-size: 10px; }
.doc .i { width: 18px; height: 16px; }
.doc button { width: 13px; height: 13px; margin-left: 3px; background: #e2593d; border: 1px solid #b53c22; color: #fff; }
.doc button svg { width: 11px; height: 11px; }
.view { flex: 1; min-height: 0; border: 1px solid #8c8c8c; border-width: 2px 0 1px 3px; border-left-color: #888; }
.view svg { width: 100%; height: 100%; }
.mark { font-family: "Noto Sans", sans-serif; font-size: 18px; fill: #1010b4; }
.ax { font-family: "Liberation Mono", monospace; font-size: 14px; font-weight: 700; text-anchor: middle; }
.viewtabs, .ptabs { flex: none; display: flex; align-items: center; height: 18px; background: #e6e6e6; font-size: 10px; }
.viewtabs .on, .ptabs .on { align-self: stretch; background: #fff; border-bottom: 2px solid #0b4f80; }
.viewtabs .on { width: 93px; }
.viewtabs .s { width: 94px; }
.viewtabs .r { padding: 0 4px 0 10px; }
.viewtabs i, .ptabs i { width: 1px; height: 10px; background: #999; }
.viewtabs .cl { width: 13px; height: 13px; background: #b5b5b5; color: #fff; border: 1px solid #8b8b8b; border-radius: 2px; margin-right: 12px; }
.viewtabs .cl svg { width: 11px; height: 11px; }
.bottom { flex: none; display: grid; grid-template-columns: minmax(0, 669fr) minmax(0, 362fr); column-gap: 4px; height: 121px; margin-top: 4px; }
.tablebox { flex: 1; display: flex; min-height: 0; overflow: hidden; border: 1px solid #8d8d8d; border-right: 0; }
table { flex: 1; width: 0; align-self: flex-start; border-collapse: collapse; table-layout: fixed; }
th { height: 21px; padding: 0 0 0 5px; text-align: left; font-weight: 400; border-right: 1px solid #e3e3e3; }
td { height: 17px; padding: 0 0 0 4px; background: #f1f1f1; border-bottom: 1px solid #e6e6e6; line-height: 14px; }
.n { width: 126px; }
.f { width: 21px; padding: 0; }
td.f { background: #e4e4e4; }
th.f svg { width: 14px; height: 14px; margin: auto; }
td.f svg { width: 12px; height: 8px; margin: auto; }
td em { float: right; color: #999; padding-right: 1px; }
.val { color: #8a8a8a; }
td.ty { position: relative; padding-left: 2px; }
td.ty select { appearance: none; display: block; width: 100%; height: 16px; line-height: 14px; }
td.ty svg { position: absolute; right: 2px; top: 4px; width: 10px; height: 10px; pointer-events: none; color: #444; }
.bar { display: flex; flex-direction: column; width: 17px; background: #c9c9c9; border-left: 1px solid #aaa; border-right: 1px solid #999; }
.bar button { height: 16px; background: #fff; border-bottom: 1px solid #999; }
.bar button:last-child { border-top: 1px solid #999; border-bottom: 0; }
.bar svg { width: 10px; height: 10px; margin: auto; }
.bar .track { flex: 1; padding-top: 26px; }
.bar .thumb { height: 17px; background: #f4f4f4; border: 1px solid #999; border-width: 1px 0; }
.ptabs { height: 20px; }
.ptabs button { padding: 0 10px; }
.job { flex: 1; min-height: 0; border: 1px solid #5c5c5c; border-width: 2px 0 0 2px; padding-left: 3px; }
.jt { display: flex; align-items: center; height: 20px; white-space: nowrap; color: #000; }
.jt .c { width: 10px; height: 10px; margin-right: 6px; }
.jt .i { width: 17px; height: 16px; margin-right: 1px; }
.jl { display: block; padding-left: 35px; line-height: 22px; white-space: nowrap; }
.jp { display: flex; align-items: center; padding-left: 35px; height: 21px; }
.jp progress { appearance: none; width: 104px; height: 14px; border: 1px solid #b9b9b9; background: #e6e6e6; }
.jp progress::-webkit-progress-bar { background: #e6e6e6; }
.jp progress::-webkit-progress-value { background: #06b025; }
.jp span { margin: 0 7px 0 5px; }
.jp button { width: 22px; height: 18px; border: 1px solid #adadad; background: #e3e3e3; margin-right: 2px; }
.jp button svg { width: 12px; height: 12px; margin: auto; }

.status { flex: none; display: flex; align-items: center; height: 27px; padding: 0 1px 0 6px; background: #f1f1f1; border-bottom: 1px solid #fff; color: #555; }
.status .right { margin-left: auto; display: flex; align-items: center; white-space: nowrap; }
.status button { width: 21px; height: 21px; }
.status button svg { width: 16px; height: 16px; margin: auto; }
.status .press { background: #c8c8c8; }
.status i { width: 1px; height: 16px; background: #ccc; margin: 0 2px; }
.status .box3 { display: flex; align-items: center; width: 26px; margin: 0 2px 0 6px; }
.status button svg.t { width: 6px; height: 6px; }
.status b { width: 1px; height: 16px; background: #222; margin: 0 5px; }
.status .u { color: #2b2b80; margin-right: 6px; }
.taskbar { flex: none; display: flex; height: 37px; background: linear-gradient(90deg, #12252d, #14211f 65%, #0e1314 82%, #0b1a20); color: #fff; }
.taskbar > button { width: 46px; }
.taskbar > button svg { width: 20px; height: 20px; margin: auto; }
.taskbar .act { background: #43555c; border-bottom: 2px solid #76b9ed; }
.tray { display: flex; align-items: center; margin-left: auto; padding-right: 14px; }
.tray > svg { width: 16px; height: 16px; margin-right: 6px; }
.tray .pp { margin-right: 19px; }
.tray .eng { margin: 0 9px 0 5px; }
.tray time { text-align: center; line-height: 17px; }
.note { position: relative; width: 20px; margin-left: 14px; }
.note svg { width: 18px; height: 18px; }
.note span { position: absolute; right: -4px; bottom: -6px; width: 14px; height: 14px; border-radius: 50%; background: #4b5154; text-align: center; line-height: 14px; font-size: 10px; }
```
